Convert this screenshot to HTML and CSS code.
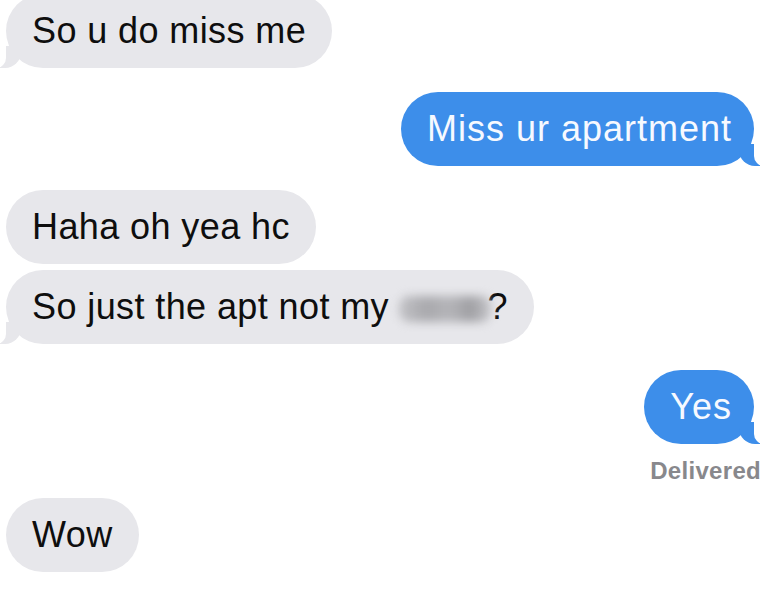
FILE: index.html
```html
<!DOCTYPE html>
<html>
<head>
<meta charset="utf-8">
<link rel="stylesheet" href="styles.css">
</head>
<body>
<div class="thread">
  <div class="bubble them tail first">So u do miss me</div>
  <div class="bubble me tail gap">Miss ur apartment</div>
  <div class="bubble them gap">Haha oh yea hc</div>
  <div class="bubble them tail close">So just the apt not my <span class="censor"></span>?</div>
  <div class="bubble me tail gap2">Yes</div>
  <div class="status">Delivered</div>
  <div class="bubble them wow">Wow</div>
</div>
</body>
</html>
```
FILE: styles.css
```css
html, body {
  margin: 0;
  padding: 0;
  background: #ffffff;
  overflow: hidden;
}
.thread {
  width: 760px;
  height: 608px;
  box-sizing: border-box;
  padding: 0 6px 0 6px;
  display: flex;
  flex-direction: column;
  align-items: flex-start;
  font-family: "Liberation Sans", Arial, Helvetica, sans-serif;
}
.bubble {
  position: relative;
  font-size: 36px;
  line-height: 44px;
  letter-spacing: 0.4px;
  padding: 15px 26px 15px 26px;
  border-radius: 37px;
  white-space: nowrap;
}
.them {
  background: #e7e7eb;
  color: #0e0e0e;
}
.me {
  background: #3d8eea;
  color: #f6f9ff;
  align-self: flex-end;
  letter-spacing: 1px;
  padding-right: 22px;
}
.first { margin-top: -6px; }
.gap { margin-top: 24px; }
.close { margin-top: 6px; }
.gap2 { margin-top: 26px; }
.wow { margin-top: 12px; }

.tail.them::before {
  content: "";
  position: absolute;
  bottom: 0;
  left: -7px;
  width: 22px;
  height: 22px;
  background: #e7e7eb;
  border-bottom-right-radius: 16px;
}
.tail.them::after {
  content: "";
  position: absolute;
  bottom: 0;
  left: -12px;
  width: 12px;
  height: 22px;
  background: #ffffff;
  border-bottom-right-radius: 10px;
}
.tail.me::before {
  content: "";
  position: absolute;
  bottom: 0;
  right: -7px;
  width: 22px;
  height: 22px;
  background: #3d8eea;
  border-bottom-left-radius: 16px;
}
.tail.me::after {
  content: "";
  position: absolute;
  bottom: 0;
  right: -12px;
  width: 12px;
  height: 22px;
  background: #ffffff;
  border-bottom-left-radius: 10px;
}
.censor {
  display: inline-block;
  width: 92px;
  height: 26px;
  margin-right: -4px;
  vertical-align: -3px;
  background: linear-gradient(90deg, #c2c2c6 0%, #a9a9ad 30%, #b5b5b9 55%, #9f9fa3 78%, #c6c6ca 100%);
  border-radius: 10px;
  filter: blur(5px);
}
.status {
  align-self: flex-end;
  margin-right: -7px;
  margin-top: 12px;
  font-size: 24px;
  line-height: 30px;
  font-weight: bold;
  color: #88888c;
  letter-spacing: 0.3px;
}
```
